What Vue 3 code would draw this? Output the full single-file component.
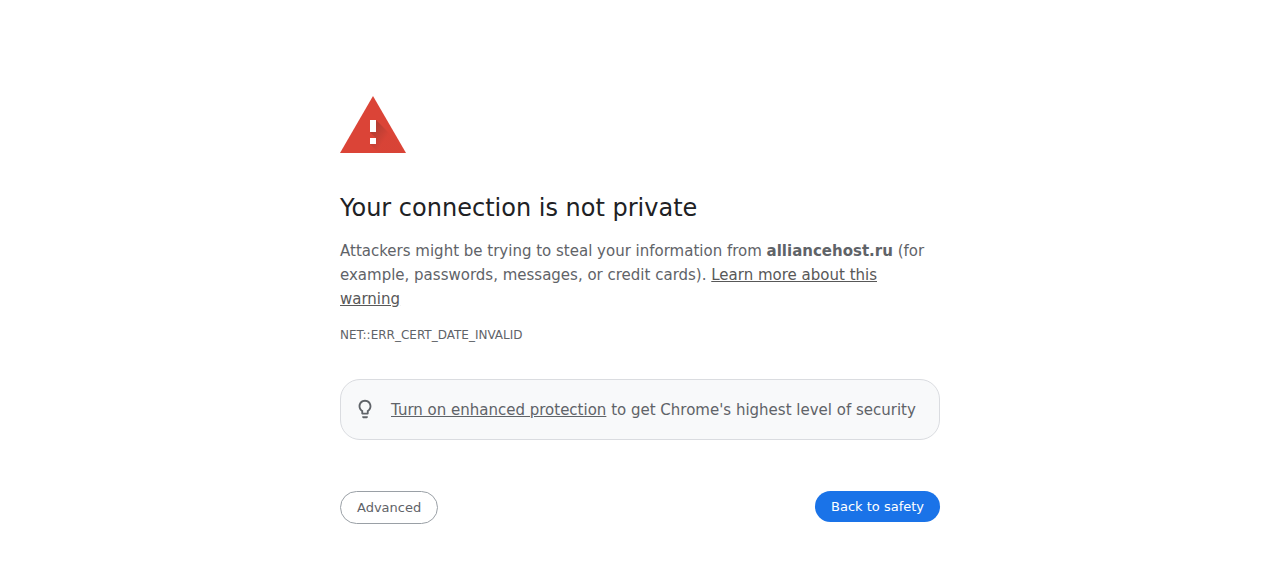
<script setup>
const host = 'alliancehost.ru'
</script>

<template>
  <main class="interstitial">
    <svg class="warning" viewBox="0 0 66 57" aria-hidden="true">
      <defs>
        <linearGradient id="shade" x1="34" y1="34" x2="46" y2="42" gradientUnits="userSpaceOnUse">
          <stop offset="0" stop-color="#3e2723" stop-opacity="0.24" />
          <stop offset="1" stop-color="#3e2723" stop-opacity="0.02" />
        </linearGradient>
      </defs>
      <path d="M33 0 66 57H0z" fill="#db4437" />
      <path d="M36 24 56 44 63.500 57H39L30 48 36 42 30 36z" fill="url(#shade)" />
      <path d="M30 24h6v12h-6zM30 42h6v6h-6z" fill="#fff" />
    </svg>
    <h1>Your connection is not private</h1>
    <p class="message">
      Attackers might be trying to steal your information from <strong>{{ host }}</strong> (for example, passwords,
      messages, or credit cards). <a href="#">Learn more about this warning</a>
    </p>
    <div class="code">NET::ERR_CERT_DATE_INVALID</div>
    <div class="promo">
      <svg class="bulb" viewBox="0 0 24 24" aria-hidden="true">
        <path d="M9 21c0 .5.4 1 1 1h4c.6 0 1-.5 1-1v-1H9v1zm3-19C8.1 2 5 5.1 5 9c0 2.400 1.200 4.500 3 5.700V17c0 .5.4 1 1 1h6c.6 0 1-.5 1-1v-2.300c1.800-1.300 3-3.400 3-5.700 0-3.900-3.100-7-7-7zm2.900 11.100l-.9.6V16h-4v-2.300l-.9-.6C7.800 12.200 7 10.600 7 9c0-2.800 2.200-5 5-5s5 2.200 5 5c0 1.600-.8 3.200-2.100 4.100z" fill="#5f6368" />
      </svg>
      <p><a href="#">Turn on enhanced protection</a> to get Chrome's highest level of security</p>
    </div>
    <div class="actions">
      <button type="button" class="secondary">Advanced</button>
      <button type="button" class="primary">Back to safety</button>
    </div>
  </main>
</template>

<style>
body {
  background: #fff;
}
</style>

<style scoped>
.interstitial {
  box-sizing: border-box;
  max-width: 600px;
  margin: 0 auto;
  padding: 96px 0 56px;
  color: #5f6368;
  font-family: "DejaVu Sans", sans-serif;
  font-size: 15px;
  line-height: 24px;
}
.warning {
  display: block;
  width: 66px;
  height: 57px;
}
h1 {
  margin: 40px 0 16px;
  color: #202124;
  font-size: 24px;
  font-weight: 400;
  line-height: 30px;
}
p {
  margin: 0;
}
a {
  color: inherit;
  text-decoration: underline;
}
.message a {
  color: #585858;
}
.code {
  margin-top: 17px;
  font-size: 12px;
  line-height: 14px;
}
.promo {
  display: flex;
  align-items: flex-start;
  gap: 15px;
  margin-top: 37px;
  padding: 18px 13px 17px;
  border: 1px solid #dadce0;
  border-radius: 20px;
  background: #f8f9fa;
}
.bulb {
  flex: none;
  width: 22px;
  height: 22px;
}
.actions {
  display: flex;
  justify-content: space-between;
  align-items: flex-start;
  margin-top: 51px;
}
button {
  padding: 8px 16px;
  border: 0;
  border-radius: 20px;
  font: 13px/15px "DejaVu Sans", sans-serif;
  cursor: pointer;
}
.secondary {
  border: 1px solid #9aa0a6;
  background: #fff;
  color: #5f6368;
}
.primary {
  background: #1a73e8;
  color: #fff;
}
</style>
